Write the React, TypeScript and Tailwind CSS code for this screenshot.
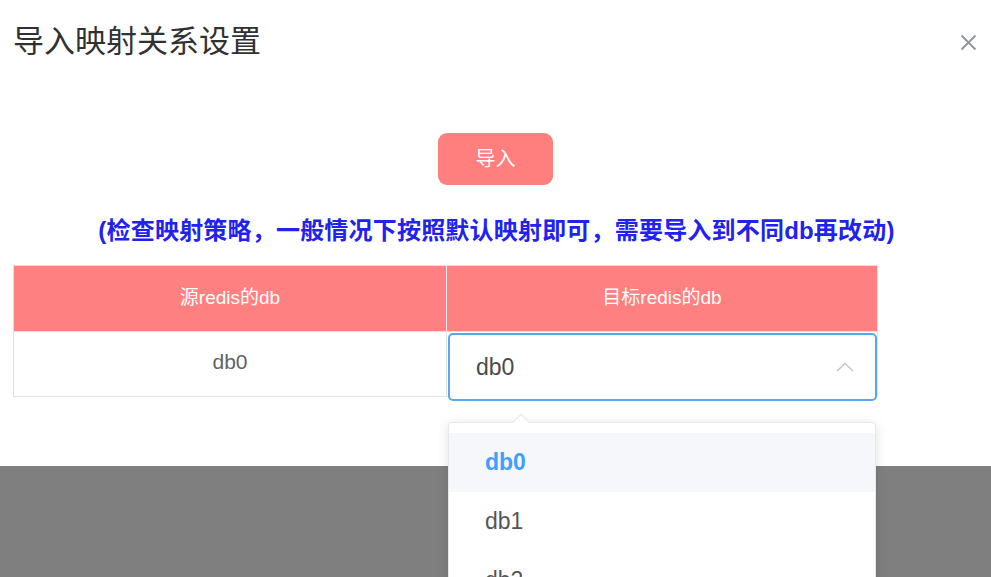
import React from 'react';

const FONT = { fontFamily: '"Liberation Sans", "Noto Sans CJK SC", sans-serif' };

const ChevronUp = () => (
  <svg width="18" height="10" viewBox="0 0 18 10" fill="none">
    <path d="M1 9 L9 1.5 L17 9" stroke="#c0c4cc" strokeWidth="1.4" />
  </svg>
);

const CloseIcon = () => (
  <svg width="17" height="17" viewBox="0 0 17 17" fill="none">
    <path d="M1.5 1.5 L15.5 15.5 M15.5 1.5 L1.5 15.5" stroke="#909399" strokeWidth="1.8" />
  </svg>
);

const options = ['db0', 'db1', 'db2'];

export default function App() {
  return (
    <div className="relative w-[991px] h-[577px] overflow-hidden flex flex-col bg-[#7f7f7f]" style={FONT}>
      {/* Dialog */}
      <div className="h-[466px] bg-white shrink-0">
        <div className="flex items-center justify-between pl-[13px] pr-[14px] pt-[24px]">
          <h1 className="text-[31px] leading-[36px] text-[#303133]">导入映射关系设置</h1>
          <CloseIcon />
        </div>

        <div className="flex justify-center mt-[73px]">
          <button className="w-[115px] h-[52px] rounded-[9px] bg-[#ff7f7f] text-white text-[20px]">
            导入
          </button>
        </div>

        <p className="mt-[30px] text-center text-[24px] leading-[32px] font-bold text-[#2222ee] pl-[2px] tracking-[0.2px]">
          (检查映射策略，一般情况下按照默认映射即可，需要导入到不同db再改动)
        </p>

        {/* Mapping table */}
        <div className="mt-[18px] ml-[13px] w-[865px] border border-[#e2e2e2]">
          <div className="grid grid-cols-[433px_1fr] h-[65px] bg-[#ff8080] text-white text-[19px]">
            <div className="flex items-center justify-center border-r border-[#e8e8e8]">源redis的db</div>
            <div className="flex items-center justify-center">目标redis的db</div>
          </div>
          <div className="grid grid-cols-[433px_1fr] h-[65px] border-t border-[#e2e2e2]">
            <div className="flex justify-center pt-[14px] text-[21px] text-[#606266] border-r border-[#e2e2e2]">db0</div>
            <div className="relative">
              <div className="absolute left-[1px] top-[1px] w-[429px] h-[68px] rounded-[5px] border-2 border-[#5aa6f5] bg-white flex items-center justify-between pl-[26px] pr-[21px]">
                <span className="text-[23px] text-[#4a4a4a]">db0</span>
                <ChevronUp />
              </div>
            </div>
          </div>
        </div>
      </div>

      {/* Select dropdown */}
      <div className="absolute left-[448px] top-[422px] w-[428px] h-[200px] bg-white rounded-[4px] border border-[#e4e7ed] shadow-[0_2px_12px_rgba(0,0,0,0.12)] pt-[10px]">
        <div className="absolute left-[66px] -top-[7px] w-[12px] h-[12px] bg-white rotate-45 border-l border-t border-[#e4e7ed]" />
        {options.map((opt, i) => (
          <div
            key={opt}
            className={
              i === 0
                ? 'h-[59px] flex items-center pl-[36px] bg-[#f5f7fa] text-[23px] font-bold text-[#409eff]'
                : 'h-[59px] flex items-center pl-[36px] text-[23px] text-[#555555]'
            }
          >
            {opt}
          </div>
        ))}
      </div>
    </div>
  );
}
